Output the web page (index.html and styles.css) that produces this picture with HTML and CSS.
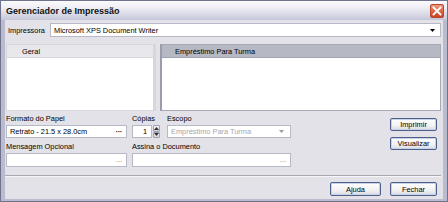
FILE: index.html
```html
<!DOCTYPE html>
<html lang="pt">
<head>
<meta charset="utf-8">
<title>Gerenciador de Impressão</title>
<link rel="stylesheet" href="styles.css">
</head>
<body>
<div class="window">
  <div class="titlebar">
    <span class="title">Gerenciador de Impressão</span>
    <span class="close">
      <svg width="10" height="10" viewBox="0 0 10 10"><path d="M1.5 1.5 L8.5 8.5 M8.5 1.5 L1.5 8.5" stroke="#fff" stroke-width="1.8" stroke-linecap="square"/></svg>
    </span>
  </div>
  <div class="body">
    <div class="printer-row">
      <span class="printer-label">Impressora</span>
      <div class="combo">
        <span class="combo-text">Microsoft XPS Document Writer</span>
        <svg class="arrow" width="5" height="3" viewBox="0 0 5 3"><path d="M0 0 H5 L2.5 3 Z" fill="#000"/></svg>
      </div>
    </div>
    <div class="panels">
      <div class="panel panel-left">
        <div class="panel-head">Geral</div>
        <div class="panel-body"></div>
      </div>
      <div class="panel panel-right">
        <div class="panel-head">Empréstimo Para Turma</div>
        <div class="panel-body"></div>
      </div>
    </div>
    <div class="form-area">
      <div class="form-grid">
        <div class="field">
          <span class="label">Formato do Papel</span>
          <div class="input"><span class="input-text">Retrato - 21.5 x 28.0cm</span><span class="dots">···</span></div>
        </div>
        <div class="field">
          <span class="label">Cópias</span>
          <div class="spin">
            <div class="input spin-input"><span class="input-text">1</span></div>
            <div class="spin-btns">
              <span class="spin-btn"><svg width="5" height="3" viewBox="0 0 5 3"><path d="M0 3 H5 L2.5 0 Z" fill="#333"/></svg></span>
              <span class="spin-btn"><svg width="5" height="3" viewBox="0 0 5 3"><path d="M0 0 H5 L2.5 3 Z" fill="#333"/></svg></span>
            </div>
          </div>
        </div>
        <div class="field">
          <span class="label">Escopo</span>
          <div class="input disabled"><span class="input-text">Empréstimo Para Turma</span>
            <svg class="arrow" width="5" height="3" viewBox="0 0 5 3"><path d="M0 0 H5 L2.5 3 Z" fill="#9a9aa2"/></svg></div>
        </div>
        <div class="field">
          <span class="label">Mensagem Opcional</span>
          <div class="input tall"><span class="input-text"></span><span class="dots light">···</span></div>
        </div>
        <div class="field wide">
          <span class="label">Assina o Documento</span>
          <div class="input tall"><span class="input-text"></span><span class="dots light">···</span></div>
        </div>
      </div>
      <div class="side-buttons">
        <button class="btn">Imprimir</button>
        <button class="btn">Visualizar</button>
      </div>
    </div>
    <div class="separator"></div>
    <div class="footer">
      <button class="btn btn-ajuda">Ajuda</button>
      <button class="btn">Fechar</button>
    </div>
  </div>
</div>
</body>
</html>
```
FILE: styles.css
```css
html, body {
  margin: 0;
  padding: 0;
  background: #e3e2e8;
}
.window {
  width: 448px;
  height: 202px;
  box-sizing: border-box;
  border: 1px solid #6e728c;
  display: flex;
  flex-direction: column;
  font-family: "Liberation Sans", Arial, sans-serif;
  font-size: 7.4px;
  color: #000;
  background: #e3e2e8;
  overflow: hidden;
}
.titlebar {
  height: 19px;
  flex: none;
  display: flex;
  align-items: center;
  justify-content: space-between;
  padding: 0 3px 0 5px;
  background: linear-gradient(to bottom, #fbfbfd 0%, #eeeef4 35%, #d3d4e2 80%, #c4c5d8 100%);
}
.title {
  font-weight: bold;
  font-size: 9px;
  color: #111;
  margin-top: 1px;
}
.close {
  width: 14px;
  height: 14px;
  box-sizing: border-box;
  border: 1px solid #b8462f;
  border-radius: 2px;
  background: linear-gradient(to bottom, #f09a80 0%, #e06a4c 45%, #c94428 100%);
  display: flex;
  align-items: center;
  justify-content: center;
  margin-top: 1px;
}
.body {
  flex: 1;
  display: flex;
  flex-direction: column;
  border-left: 4px solid #babbce;
  border-right: 4px solid #babbce;
  border-bottom: 2px solid #babbce;
  padding: 3px 2px 0 0;
  background: #e3e2e8;
}
.printer-row {
  display: flex;
  align-items: center;
  height: 14px;
}
.printer-label {
  width: 42px;
  padding-left: 3px;
  flex: none;
}
.combo {
  flex: 1;
  height: 14px;
  box-sizing: border-box;
  border: 1px solid #b7b9c6;
  background: #fff;
  display: flex;
  align-items: center;
  padding: 0 5px 0 3px;
}
.combo-text {
  flex: 1;
}
.panels {
  display: flex;
  gap: 4px;
  margin: 7px 0 0 1px;
  height: 67px;
}
.panel {
  display: flex;
  flex-direction: column;
  box-sizing: border-box;
  background: #fff;
}
.panel-left {
  width: 150px;
  border: 1px solid #d6d6dc;
  border-right: 3px solid #d6d6dc;
}
.panel-right {
  flex: 1;
  border: 1px solid #a6a8b5;
  border-left: 2px solid #9a9cab;
}
.panel-head {
  height: 13px;
  box-sizing: border-box;
  display: flex;
  align-items: center;
  flex: none;
}
.panel-left .panel-head {
  background: #e8e8ec;
  padding-left: 15px;
  border-bottom: 1px solid #d6d6dc;
}
.panel-right .panel-head {
  background: #b6b8c3;
  padding-left: 13px;
  border-bottom: 1px solid #a0a2b0;
}
.panel-body {
  flex: 1;
}
.form-area {
  display: flex;
  margin: 3px 0 0 1px;
}
.form-grid {
  display: grid;
  grid-template-columns: 121px 28px 126px;
  column-gap: 5px;
  row-gap: 4px;
}
.form-grid .field:nth-child(3) {
  margin-left: 2px;
}
.field {
  display: flex;
  flex-direction: column;
}
.field.wide {
  grid-column: 2 / 4;
}
.label {
  height: 10px;
  line-height: 10px;
  margin-bottom: 1px;
  white-space: nowrap;
}
.input {
  height: 13px;
  box-sizing: border-box;
  border: 1px solid #b7b9c6;
  background: #fff;
  display: flex;
  align-items: center;
  padding: 0 4px 0 3px;
  white-space: nowrap;
  overflow: hidden;
}
.input.tall {
  height: 14px;
}
.input-text {
  flex: 1;
}
.input.disabled {
  color: #a6a6ae;
  padding-right: 6px;
}
.dots {
  font-weight: bold;
  font-size: 8px;
  letter-spacing: -0.5px;
  color: #222;
}
.dots.light {
  font-weight: normal;
  color: #8a8a92;
  align-self: flex-end;
  line-height: 9px;
}
.spin {
  display: flex;
  gap: 1px;
  height: 13px;
}
.spin-input {
  width: 20px;
  text-align: right;
  padding-right: 4px;
}
.spin-btns {
  display: flex;
  flex-direction: column;
  width: 7px;
}
.spin-btn {
  flex: 1;
  box-sizing: border-box;
  border: 1px solid #9ea2b4;
  border-radius: 1px;
  background: linear-gradient(to bottom, #f6f6f8, #d4d5de);
  display: flex;
  align-items: center;
  justify-content: center;
}
.side-buttons {
  margin-left: auto;
  margin-right: 4px;
  padding-top: 4px;
  display: flex;
  flex-direction: column;
  gap: 6px;
}
.btn {
  width: 47px;
  height: 13px;
  box-sizing: border-box;
  border: 1px solid #4d5f8a;
  border-radius: 2px;
  background: linear-gradient(to bottom, #ffffff 0%, #f2f2f4 60%, #d8d9e0 100%);
  box-shadow: inset 0 0 0 1px #c9d3e6;
  font-family: "Liberation Sans", Arial, sans-serif;
  font-size: 7.4px;
  color: #000;
  padding: 0;
  line-height: 11px;
}
.separator {
  margin-top: 8px;
  height: 1px;
  background: #a9a9b5;
  border-bottom: 1px solid #f6f6f8;
}
.footer {
  display: flex;
  justify-content: flex-end;
  gap: 9px;
  margin-top: 5px;
  margin-right: 4px;
}
.footer .btn {
  height: 14px;
}
.btn-ajuda {
  width: 51px;
}
```
